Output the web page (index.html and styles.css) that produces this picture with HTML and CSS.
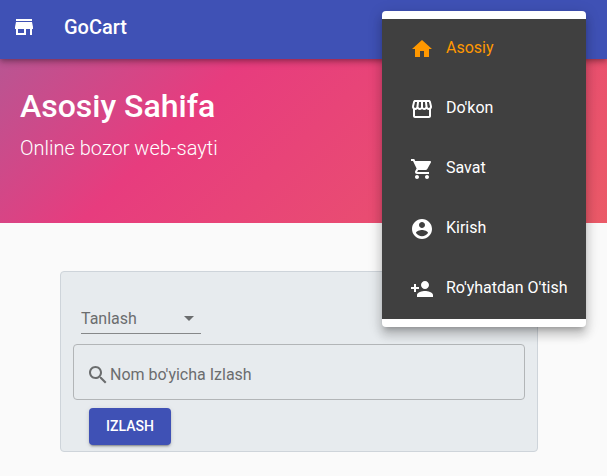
FILE: index.html
```html
<!DOCTYPE html>
<html lang="uz">
<head>
<meta charset="utf-8">
<meta name="viewport" content="width=device-width, initial-scale=1">
<title>GoCart</title>
<link rel="stylesheet" href="styles.css">
</head>
<body>
<header class="appbar">
  <svg class="icon" viewBox="0 0 24 24" aria-hidden="true"><path d="M20 4H4v2h16V4zm1 10v-2l-1-5H4l-1 5v2h1v6h10v-6h4v6h2v-6h1zm-9 4H6v-4h6v4z"/></svg>
  <a class="brand" href="#">GoCart</a>
</header>

<nav class="menu">
  <a class="menu-item active" href="#">
    <svg class="icon" viewBox="0 0 24 24" aria-hidden="true"><path d="M10 20v-6h4v6h5v-8h3L12 3 2 12h3v8z"/></svg>
    <span>Asosiy</span>
  </a>
  <a class="menu-item" href="#">
    <svg class="icon" viewBox="0 0 24 24" aria-hidden="true"><path d="M21.9 8.89l-1.05-4.37c-.22-.9-1-1.52-1.91-1.52H5.05c-.9 0-1.69.63-1.9 1.52L2.1 8.89c-.24 1.02-.02 2.06.62 2.88.08.11.19.19.28.29V19c0 1.1.9 2 2 2h14c1.1 0 2-.9 2-2v-6.94c.09-.09.2-.18.28-.28.64-.82.87-1.87.62-2.89zm-2.99-3.9l1.05 4.37c.1.42.01.84-.25 1.17-.14.18-.44.47-.94.47-.61 0-1.14-.49-1.21-1.14L16.98 5l1.93-.01zM13 5h1.96l.54 4.52c.05.39-.07.78-.33 1.07-.22.26-.54.41-.95.41-.67 0-1.22-.59-1.22-1.31V5zM8.49 9.52L9.04 5H11v4.69c0 .72-.55 1.31-1.29 1.31-.34 0-.65-.15-.89-.41-.25-.29-.37-.68-.33-1.07zm-4.45-.16L5.05 5h1.97l-.58 4.86c-.08.65-.6 1.14-1.21 1.14-.49 0-.8-.29-.93-.47-.27-.32-.36-.75-.26-1.17zM5 19v-6.03c.08.01.15.03.23.03.87 0 1.66-.36 2.24-.95.6.6 1.4.95 2.31.95.87 0 1.65-.36 2.23-.93.59.57 1.39.93 2.29.93.84 0 1.64-.35 2.24-.95.58.59 1.37.95 2.24.95.08 0 .15-.02.23-.03V19H5z"/></svg>
    <span>Do'kon</span>
  </a>
  <a class="menu-item" href="#">
    <svg class="icon" viewBox="0 0 24 24" aria-hidden="true"><path d="M7 18c-1.1 0-1.99.9-1.99 2S5.9 22 7 22s2-.9 2-2-.9-2-2-2zM1 2v2h2l3.6 7.59-1.35 2.45c-.16.28-.25.61-.25.96 0 1.1.9 2 2 2h12v-2H7.42c-.14 0-.25-.11-.25-.25l.03-.12.9-1.63h7.45c.75 0 1.41-.41 1.75-1.03l3.58-6.49c.08-.14.12-.31.12-.48 0-.55-.45-1-1-1H5.21l-.94-2H1zm16 16c-1.1 0-1.99.9-1.99 2s.89 2 1.99 2 2-.9 2-2-.9-2-2-2z"/></svg>
    <span>Savat</span>
  </a>
  <a class="menu-item" href="#">
    <svg class="icon" viewBox="0 0 24 24" aria-hidden="true"><path d="M12 2C6.480 2 2 6.480 2 12s4.480 10 10 10 10-4.480 10-10S17.520 2 12 2zm0 3c1.660 0 3 1.340 3 3s-1.340 3-3 3-3-1.340-3-3 1.340-3 3-3zm0 14.200c-2.500 0-4.710-1.280-6-3.220.03-1.990 4-3.080 6-3.080 1.990 0 5.970 1.090 6 3.080-1.290 1.940-3.500 3.220-6 3.220z"/></svg>
    <span>Kirish</span>
  </a>
  <a class="menu-item" href="#">
    <svg class="icon" viewBox="0 0 24 24" aria-hidden="true"><path d="M15 12c2.210 0 4-1.790 4-4s-1.790-4-4-4-4 1.790-4 4 1.790 4 4 4zm-9-2V7H4v3H1v2h3v3h2v-3h3v-2H6zm9 4c-2.670 0-8 1.340-8 4v2h16v-2c0-2.660-5.330-4-8-4z"/></svg>
    <span>Ro'yhatdan O'tish</span>
  </a>
</nav>

<section class="hero">
  <h1 class="hero-title">Asosiy Sahifa</h1>
  <p class="hero-text">Online bozor web-sayti</p>
</section>

<main class="page">
  <form class="search-card">
    <div class="picker">
      <select class="picker-select" aria-label="Tanlash">
        <option>Tanlash</option>
      </select>
      <svg class="picker-arrow" viewBox="0 0 24 24" aria-hidden="true"><path d="M7 10l5 5 5-5z"/></svg>
    </div>
    <label class="search-field">
      <svg class="icon" viewBox="0 0 24 24" aria-hidden="true"><path d="M15.500 14h-.79l-.28-.27C15.410 12.590 16 11.110 16 9.500 16 5.910 13.090 3 9.500 3S3 5.910 3 9.500 5.910 16 9.500 16c1.610 0 3.090-.59 4.230-1.570l.27.28v.79l5 4.990L20.490 19l-4.990-5zm-6 0C7.010 14 5 11.990 5 9.500S7.010 5 9.500 5 14 7.010 14 9.500 11.990 14 9.500 14z"/></svg>
      <input class="search-input" type="text" placeholder="Nom bo'yicha Izlash" aria-label="Nom bo'yicha Izlash">
    </label>
    <button class="search-button" type="button">IZLASH</button>
  </form>
</main>
</body>
</html>
```

FILE: styles.css
```css
* {
  box-sizing: border-box;
}

body {
  margin: 0;
  background: #fafafa;
  font-family: Roboto, "Liberation Sans", sans-serif;
  font-size: 16px;
  line-height: 24px;
}

a {
  color: inherit;
  text-decoration: none;
}

.icon {
  width: 24px;
  height: 24px;
  flex: none;
  fill: currentColor;
}

.appbar {
  position: relative;
  display: flex;
  align-items: center;
  gap: 28px;
  padding: 11px 12px 16px;
  background: #3f51b5;
  color: #fff;
  box-shadow: 0 2px 4px -1px rgba(0, 0, 0, .2), 0 4px 5px rgba(0, 0, 0, .14), 0 1px 10px rgba(0, 0, 0, .12);
}

.brand {
  font-size: 20px;
  font-weight: 500;
  line-height: 32px;
}

.menu {
  position: absolute;
  z-index: 2;
  top: 11px;
  right: 21px;
  min-width: 204px;
  padding: 8px 0;
  border-radius: 4px;
  background: #fff;
  box-shadow: 0 5px 5px -3px rgba(0, 0, 0, .2), 0 8px 10px 1px rgba(0, 0, 0, .14), 0 3px 14px 2px rgba(0, 0, 0, .12);
}

.menu-item {
  display: flex;
  align-items: center;
  gap: 12px;
  height: 60px;
  padding: 0 16px 0 28px;
  background: #404040;
  color: #fff;
}

.menu-item span {
  padding-bottom: 2px;
}

.menu-item.active {
  color: #ff9800;
}

.hero {
  padding: 27px 20px 59px;
  background: linear-gradient(-45deg, #ee7752, #e73c7e, #23a6d5, #23d5ab) 86% 50% / 400% 400%;
  color: #fff;
}

.hero-title {
  margin: 0;
  font-size: 32px;
  font-weight: 500;
  line-height: 40px;
}

.hero-text {
  margin: 6px 0 0;
  font-size: 20px;
  font-weight: 300;
  line-height: 32px;
}

.page {
  padding: 48px 69px 24px 60px;
}

.search-card {
  padding: 28px 12px 6px;
  border: 1px solid #ced4da;
  border-radius: 4px;
  background: #e7ebee;
}

.picker {
  position: relative;
  width: 120px;
  margin: 0 8px 10px;
}

.picker-select {
  display: block;
  width: 100%;
  height: 34px;
  padding: 6px 24px 2px 0;
  border: 0;
  border-bottom: 1px solid #868889;
  border-radius: 0;
  appearance: none;
  background: none;
  color: #6b6d6e;
  font: inherit;
}

.picker-arrow {
  position: absolute;
  top: 6px;
  right: 0;
  width: 24px;
  height: 24px;
  fill: #6b6d6e;
  pointer-events: none;
}

.search-field {
  display: flex;
  align-items: center;
  height: 56px;
  padding: 0 12px;
  border: 1px solid #b2b5b7;
  border-radius: 4px;
  color: #6b6d6e;
}

.search-field .icon {
  margin-top: 6px;
}

.search-input {
  flex: 1;
  min-width: 0;
  padding: 6px 0 0;
  border: 0;
  background: none;
  font: inherit;
}

.search-input::placeholder {
  color: #6b6d6e;
  opacity: 1;
}

.search-button {
  display: block;
  min-width: 82px;
  margin: 8px 16px 0;
  padding: 6px 16px;
  border: 0;
  border-radius: 4px;
  background: #3f51b5;
  color: #fff;
  font: 500 14px/25px Roboto, "Liberation Sans", sans-serif;
  box-shadow: 0 3px 1px -2px rgba(0, 0, 0, .2), 0 2px 2px rgba(0, 0, 0, .14), 0 1px 5px rgba(0, 0, 0, .12);
}
```
